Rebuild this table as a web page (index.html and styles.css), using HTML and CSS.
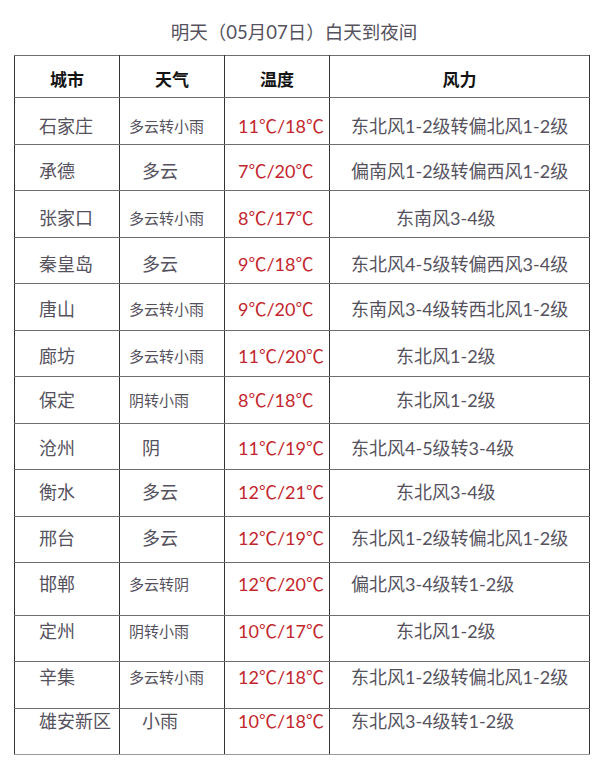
FILE: index.html
```html
<!DOCTYPE html>
<html lang="zh-CN">
<head>
<meta charset="utf-8">
<title>明天（05月07日）白天到夜间</title>
<link rel="stylesheet" href="styles.css">
</head>
<body>
<div class="page">
  <h1 class="title">明天（05月07日）白天到夜间</h1>
  <table class="weather">
    <colgroup>
      <col class="c-city"><col class="c-wx"><col class="c-temp"><col class="c-wind">
    </colgroup>
    <thead>
      <tr><th>城市</th><th>天气</th><th>温度</th><th>风力</th></tr>
    </thead>
    <tbody>
      <tr><td class="city">石家庄</td><td class="wx">多云转小雨</td><td class="temp">11℃/18℃</td><td class="wind">东北风1-2级转偏北风1-2级</td></tr>
      <tr><td class="city">承德</td><td class="wx short">多云</td><td class="temp">7℃/20℃</td><td class="wind">偏南风1-2级转偏西风1-2级</td></tr>
      <tr><td class="city">张家口</td><td class="wx">多云转小雨</td><td class="temp">8℃/17℃</td><td class="wind short">东南风3-4级</td></tr>
      <tr><td class="city">秦皇岛</td><td class="wx short">多云</td><td class="temp">9℃/18℃</td><td class="wind">东北风4-5级转偏西风3-4级</td></tr>
      <tr><td class="city">唐山</td><td class="wx">多云转小雨</td><td class="temp">9℃/20℃</td><td class="wind">东南风3-4级转西北风1-2级</td></tr>
      <tr><td class="city">廊坊</td><td class="wx">多云转小雨</td><td class="temp">11℃/20℃</td><td class="wind short">东北风1-2级</td></tr>
      <tr><td class="city">保定</td><td class="wx">阴转小雨</td><td class="temp">8℃/18℃</td><td class="wind short">东北风1-2级</td></tr>
      <tr><td class="city">沧州</td><td class="wx short">阴</td><td class="temp">11℃/19℃</td><td class="wind">东北风4-5级转3-4级</td></tr>
      <tr><td class="city">衡水</td><td class="wx short">多云</td><td class="temp">12℃/21℃</td><td class="wind short">东北风3-4级</td></tr>
      <tr><td class="city">邢台</td><td class="wx short">多云</td><td class="temp">12℃/19℃</td><td class="wind">东北风1-2级转偏北风1-2级</td></tr>
      <tr class="tall"><td class="city">邯郸</td><td class="wx">多云转阴</td><td class="temp">12℃/20℃</td><td class="wind">偏北风3-4级转1-2级</td></tr>
      <tr><td class="city">定州</td><td class="wx">阴转小雨</td><td class="temp">10℃/17℃</td><td class="wind short">东北风1-2级</td></tr>
      <tr><td class="city">辛集</td><td class="wx">多云转小雨</td><td class="temp">12℃/18℃</td><td class="wind">东北风1-2级转偏北风1-2级</td></tr>
      <tr><td class="city">雄安新区</td><td class="wx short">小雨</td><td class="temp">10℃/18℃</td><td class="wind">东北风3-4级转1-2级</td></tr>
    </tbody>
  </table>
</div>
</body>
</html>
```

FILE: styles.css
```css
html, body {
  margin: 0;
  padding: 0;
  background: #ffffff;
}

.page {
  width: 600px;
  padding-top: 20px;
  font-family: Lato, "Noto Sans CJK SC", sans-serif;
  color: #55525e;
}

.title {
  margin: 0 0 11px;
  font-size: 18.5px;
  line-height: 24px;
  font-weight: normal;
  text-align: center;
  color: #55525e;
  padding-right: 12px;
}

.weather {
  margin-left: 14px;
  width: 575px;
  table-layout: fixed;
  border-collapse: collapse;
  border: 1px solid #333;
}

.c-city, .c-wx, .c-temp { width: 105px; }
.c-wind { width: 260px; }

.weather th,
.weather td {
  border-left: 1px solid #333;
  border-right: 1px solid #333;
  border-top: 1px solid #6e6e6e;
  border-bottom: 1px solid #6e6e6e;
  padding: 0;
  line-height: 24px;
  vertical-align: top;
  white-space: nowrap;
  overflow: visible;
}

.weather th {
  height: 42px;
  box-sizing: border-box;
  padding-top: 12px;
  font-size: 17px;
  font-weight: bold;
  color: #141414;
  text-align: center;
}

.weather thead tr { height: 42px; }
.weather tbody tr { height: 46.5px; }
.weather tbody tr.tall { height: 52.8px; }
.weather tbody tr:last-child td { border-bottom-color: #999; }

.city {
  font-size: 18px;
  padding-left: 24px !important;
}

.wx {
  font-size: 15px;
  padding-left: 9px !important;
}
.wx.short {
  font-size: 18px;
  padding-left: 22px !important;
}

.temp {
  font-size: 18px;
  color: #c3262d;
  padding-left: 13px !important;
}

.wind {
  font-size: 18px;
  padding-left: 21px !important;
}
.wind.short { padding-left: 66px !important; }

/* text baseline drifts slightly up through the table, as in the source image */
.weather tbody tr:nth-child(1) td { padding-top: 16px; }
.weather tbody tr:nth-child(2) td { padding-top: 14px; }
.weather tbody tr:nth-child(3) td { padding-top: 14.5px; }
.weather tbody tr:nth-child(4) td { padding-top: 14px; }
.weather tbody tr:nth-child(5) td { padding-top: 13.4px; }
.weather tbody tr:nth-child(6) td { padding-top: 13px; }
.weather tbody tr:nth-child(7) td { padding-top: 11.3px; }
.weather tbody tr:nth-child(8) td { padding-top: 12px; }
.weather tbody tr:nth-child(9) td { padding-top: 10.4px; }
.weather tbody tr:nth-child(10) td { padding-top: 9.6px; }
.weather tbody tr:nth-child(11) td { padding-top: 9px; }
.weather tbody tr:nth-child(12) td { padding-top: 3px; }
.weather tbody tr:nth-child(13) td { padding-top: 2.7px; }
.weather tbody tr:nth-child(14) td { padding-top: 0.7px; }
```
